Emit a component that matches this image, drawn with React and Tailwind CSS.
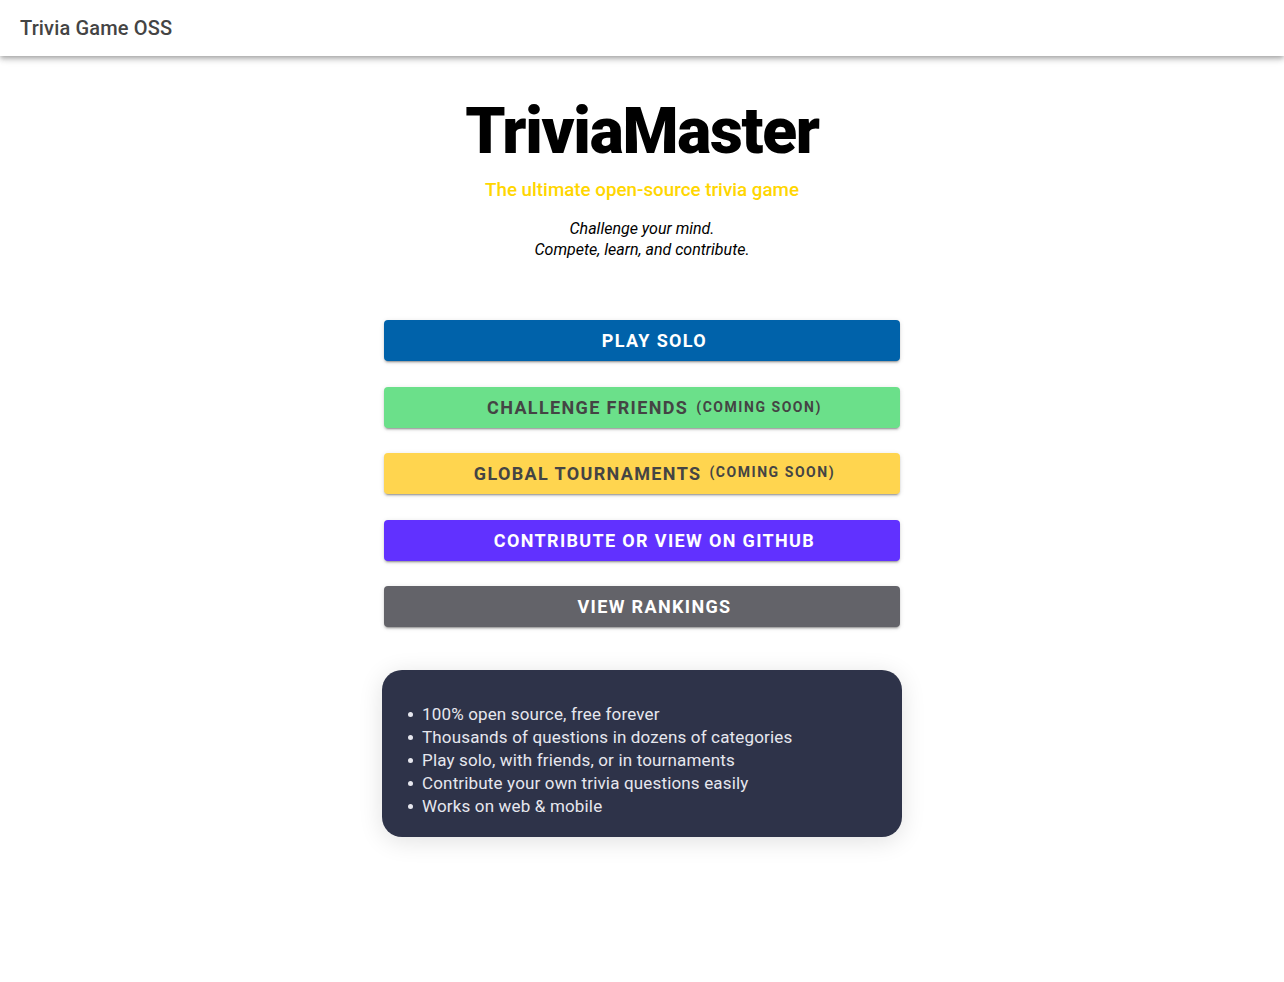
export default function App() {
  const font = { fontFamily: "Roboto, 'Liberation Sans', sans-serif" };
  const btn =
    "w-[516px] h-[41px] pl-[25px] rounded-[4px] flex items-center justify-center font-bold text-[18px] tracking-[0.075em] uppercase shadow-[0_3px_1px_-2px_rgba(0,0,0,0.2),0_2px_2px_0_rgba(0,0,0,0.14),0_1px_5px_0_rgba(0,0,0,0.12)]";
  const items = [
    "100% open source, free forever",
    "Thousands of questions in dozens of categories",
    "Play solo, with friends, or in tournaments",
    "Contribute your own trivia questions easily",
    "Works on web & mobile",
  ];
  return (
    <div style={font} className="min-h-[982px] bg-white">
      <header className="h-[56px] flex items-center px-[20px] bg-white shadow-[0_2px_4px_-1px_rgba(0,0,0,0.2),0_4px_5px_0_rgba(0,0,0,0.14),0_1px_10px_0_rgba(0,0,0,0.12)] relative z-10">
        <div className="text-[20px] font-medium tracking-[0.0075em] text-[#444]">Trivia Game OSS</div>
      </header>
      <main className="flex flex-col items-center">
        <h1 className="mt-[38px] text-[64px] leading-[76px] font-black tracking-[-0.02em] text-black">TriviaMaster</h1>
        <p className="mt-[8px] text-[18.8px] leading-[24px] font-medium text-[#FFD600]">The ultimate open-source trivia game</p>
        <p className="mt-[16px] text-[16px] leading-[21px] italic text-black text-center">
          Challenge your mind.
          <br />
          Compete, learn, and contribute.
        </p>
        <div className="mt-[60px] flex flex-col gap-[25.5px]">
          <button className={btn + " bg-[#0062AA] text-white"}>Play Solo</button>
          <button className={btn + " bg-[#6BE08A] text-[#444]"}>
            Challenge Friends <span className="ml-[8px] text-[14px] tracking-[0.11em]">(Coming Soon)</span>
          </button>
          <button className={btn + " bg-[#FFD54F] text-[#444]"}>
            Global Tournaments <span className="ml-[8px] text-[14px] tracking-[0.11em] -translate-y-[1px]">(Coming Soon)</span>
          </button>
          <button className={btn + " bg-[#6131FF] text-white"}>Contribute or View on GitHub</button>
          <button className={btn + " bg-[#636369] text-white"}>View Rankings</button>
        </div>
        <div className="mt-[43px] w-[520px] h-[167px] rounded-[20px] bg-[#2E3349] shadow-[0_4px_24px_rgba(0,0,0,0.12)] pt-[33px] px-[24px]">
          <ul className="text-[17px] leading-[23px] tracking-[0.00938em] text-[#E6E7EE]">
            {items.map((t) => (
              <li key={t} className="flex items-center">
                <span className="ml-[2px] mr-[9px] w-[5px] h-[5px] rounded-full bg-[#E6E7EE] shrink-0" />
                <span>{t}</span>
              </li>
            ))}
          </ul>
        </div>
      </main>
    </div>
  );
}
